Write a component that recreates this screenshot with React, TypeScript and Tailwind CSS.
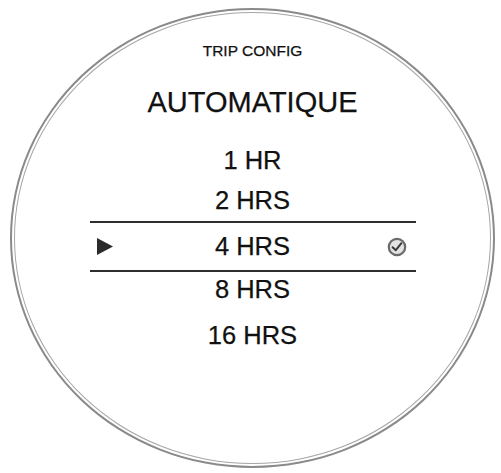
import React from "react"

const font = { fontFamily: '"Liberation Sans", Arial, sans-serif' }

function PointerIcon() {
  return (
    <svg width="18" height="19" viewBox="0 0 18 19" className="block">
      <polygon points="1,1 17,9.5 1,18" fill="#2b2b2b" />
    </svg>
  )
}

function CheckIcon() {
  return (
    <svg width="20" height="20" viewBox="0 0 20 20" className="block">
      <circle cx="10" cy="10" r="8.2" fill="#e2e2e2" stroke="#6b6b6b" strokeWidth="2.2" />
      <path d="M5.6 10.2 L8.8 13.2 L14.4 6.2" fill="none" stroke="#3a3a3a" strokeWidth="2" strokeLinecap="round" strokeLinejoin="round" />
    </svg>
  )
}

const options = ["1 HR", "2 HRS", "4 HRS", "8 HRS", "16 HRS"]

export default function App() {
  return (
    <div className="h-[473px] w-[501px] overflow-hidden bg-white" style={font}>
      <div className="ml-[10px] mt-[8px] h-[460px] w-[485px] rounded-[50%] border-2 border-[#8a8a8a] p-[2px]">
        <div className="flex h-full w-full flex-col items-center rounded-[50%] border border-[#a5a5a5] pt-[29px] text-[#111] [-webkit-text-stroke:0.25px_#111]">
          <p className="text-[15.5px] leading-[18px]">TRIP CONFIG</p>
          <h1 className="mt-[26px] text-[29px] leading-[32px]">AUTOMATIQUE</h1>

          <div className="mt-[22px] flex flex-col items-center">
            <div className="flex h-[40px] items-center text-[25.5px]">{options[0]}</div>
            <div className="flex h-[41px] items-center text-[25.5px]">{options[1]}</div>
            <div className="h-[2px] w-[326px] bg-[#2e2e2e]" />
            <div className="grid h-[47px] w-[326px] grid-cols-[1fr_auto_1fr] items-center">
              <div className="pl-[6px]">
                <PointerIcon />
              </div>
              <div className="text-[25.5px]">{options[2]}</div>
              <div className="flex justify-end pr-[9px]">
                <CheckIcon />
              </div>
            </div>
            <div className="h-[2px] w-[326px] bg-[#2e2e2e]" />
            <div className="flex h-[34px] items-center text-[25.5px]">{options[3]}</div>
            <div className="mt-[9px] flex h-[40px] items-center text-[25.5px]">{options[4]}</div>
          </div>
        </div>
      </div>
    </div>
  )
}
